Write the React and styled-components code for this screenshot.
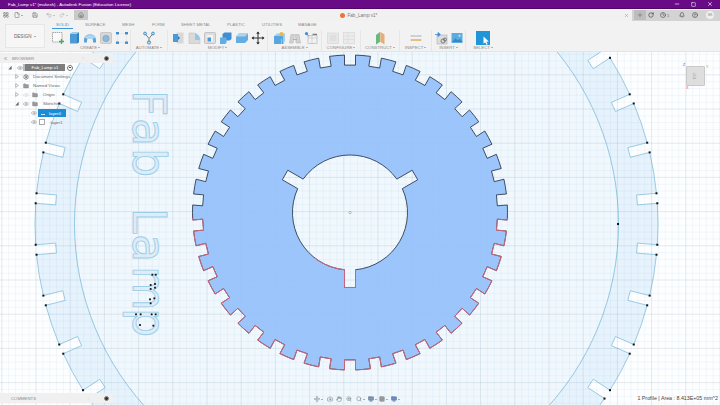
import React from 'react';
import styled, { createGlobalStyle } from 'styled-components';
import { LayoutGrid, File, Save, Undo2, Redo2, Home, Plus, RotateCw, Clock, Bell, CircleHelp, Minus, X, Settings, Eye, Folder, Hand, ZoomIn, Search, Monitor, Grid3x3, Camera, Move, Square, ChevronsLeft } from 'lucide-react';

const Global = createGlobalStyle`
  html, body { margin: 0; padding: 0; background: #fff; }
  body { font-family: "Liberation Sans", Arial, sans-serif; }
`;

const Root = styled.div`
  width: 720px; height: 405px; overflow: hidden;
  display: flex; flex-direction: column;
  font-family: "Liberation Sans", Arial, sans-serif;
`;

/* ---- title bar ---- */
const TitleBar = styled.div`
  height: 8px; flex: none; background: #690a86; border-bottom: 1px solid #4f0866;
  display: flex; align-items: center; padding: 0 7px 0 8px; color: #fff;
`;
const TitleText = styled.span`
  font-size: 4.35px; font-weight: 400; flex: 1; white-space: nowrap;
`;
const WinButtons = styled.div`
  display: flex; gap: 11px; align-items: center;
`;

/* ---- quick access ---- */
const QuickBar = styled.div`
  height: 12px; flex: none; background: #f1f1f1; display: flex; align-items: center;
`;
const QuickIcon = styled.span`
  display: flex; align-items: center; justify-content: center; flex: none;
  width: ${p => p.$w || 12}px; height: 10px; margin-right: ${p => p.$mr || 0}px;
  color: ${p => p.$c || '#666'}; background: ${p => p.$bg || 'transparent'};
`;
const DocTab = styled.div`
  position: absolute; left: 340px; top: 9px; height: 12px;
  display: flex; align-items: center; gap: 2.5px;
  font-size: 4.6px; color: #777;
`;
const OrangeDot = styled.span`
  width: 5px; height: 5px; border-radius: 50%; background: #e9743a; display: block;
`;
const Spacer = styled.div` flex: 1; `;
const CloseGlyph = styled.span`
  color: #888; display: flex; margin-right: 3px;
`;
const RightCluster = styled.div`
  width: 88px; height: 11px; background: #d3d3d3; display: flex; align-items: center; padding-left: 2px; box-sizing: border-box;
`;
const Avatar = styled.span`
  width: 8px; height: 8px; border-radius: 50%; background: #efefef; color: #888; font-size: 3px;
  display: flex; align-items: center; justify-content: center; margin-left: 8px;
`;
const Count = styled.span` font-size: 4px; color: #666; margin-right: 10px; `;

/* ---- ribbon ---- */
const Ribbon = styled.div`
  height: 31px; flex: none; background: #f2f2f2; display: flex; align-items: flex-start;
  padding-left: 5px; box-sizing: border-box; border-bottom: 1px solid #e4e4e4;
`;
const DesignButton = styled.div`
  width: 40px; height: 24px; margin-top: 3px; margin-right: 5px; flex: none; box-sizing: border-box;
  background: #f6f6f6; border: 1px solid #e6e6e6;
  display: flex; align-items: center; justify-content: center; gap: 1.5px;
  font-size: 4.6px; color: #666;
`;
const Caret = styled.span`
  display: inline-block; margin-left: 1px; vertical-align: middle;
  border-left: 1.2px solid transparent; border-right: 1.2px solid transparent; border-top: 1.6px solid ${p => p.$c || '#666'};
`;
const RibbonBody = styled.div` display: flex; flex-direction: column; `;
const Tabs = styled.div` display: flex; height: 8px; padding-left: 2px; `;
const Tab = styled.div`
  width: ${p => p.$w}px; margin-right: ${p => p.$mr || 0}px; height: 8px; box-sizing: border-box;
  font-size: 4.3px; line-height: 7px; white-space: nowrap;
  text-align: ${p => (p.$on ? 'center' : 'left')};
  color: ${p => (p.$on ? '#3b97d6' : '#8c8c8c')};
  border-bottom: ${p => (p.$on ? '1px solid #3b97d6' : 'none')};
`;
const Groups = styled.div` display: flex; height: 22px; `;
const Group = styled.div`
  width: ${p => p.$w}px; flex: none; box-sizing: border-box; display: flex; flex-direction: column; align-items: center;
  border-right: ${p => (p.$last ? 'none' : '1px solid #e6e6e6')};
  margin: 1px 0 0;
`;
const IconRow = styled.div`
  height: 15px; display: flex; align-items: center; gap: 2px;
`;
const GroupLabel = styled.div`
  font-size: 4.3px; line-height: 6px; color: #8a8a8a; white-space: nowrap;
`;
const Ico = styled.svg`
  width: 14px; height: 14px; display: block; flex: none; opacity: .92;
`;

/* ---- canvas ---- */
const Canvas = styled.div`
  flex: 1; position: relative; background: #fdfeff; overflow: hidden;
`;
const Drawing = styled.svg`
  display: block; width: 720px; height: 353px;
`;

/* ---- browser ---- */
const Browser = styled.div`
  position: absolute; left: 0; top: 1px; width: 113px;
`;
const PanelHead = styled.div`
  height: 10px; background: rgba(239,239,239,.96); display: flex; align-items: center; justify-content: space-between;
  padding: 0 3px 0 3px; font-size: 4.3px; color: #888;
`;
const PanelTitle = styled.span` flex: 1; margin-left: 4px; `;
const PinDot = styled.span`
  width: 3px; height: 3px; border-radius: 50%; background: #333; border: .5px solid #888; display: block; margin-right: 1px;
`;
const Row = styled.div`
  height: 9.1px; display: flex; align-items: center; padding-left: ${p => p.$indent}px;
  font-size: 4.4px; color: #666; white-space: nowrap;
`;
const Tri = styled.svg` width: 4px; height: 5px; display: block; flex: none; margin-right: ${p => p.$mr || 0}px; `;
const RowGlyph = styled.span`
  display: flex; flex: none; width: ${p => p.$w || 9}px; justify-content: center; color: ${p => p.$c || '#777'};
`;
const RootChip = styled.span`
  background: #7d7d7d; color: #fff; width: 42px; height: 7px; line-height: 7px; text-align: center; margin-right: 2px; font-size: 4.4px;
  border-left: 2px solid #bbb; box-sizing: border-box;
`;
const Pin = styled.span`
  width: 4px; height: 4px; border-radius: 50%; border: .5px solid #777; background: #fff; position: relative; display: block;
  &::after { content: ''; position: absolute; left: 1px; top: 1px; width: 1.5px; height: 1.5px; border-radius: 50%; background: #333; }
`;
const ActiveLayer = styled.span`
  width: 28px; height: 7.5px; background: #1b8dd6; color: #fff; display: flex; align-items: center; gap: 4px; padding-left: 3px; box-sizing: border-box; margin-left: 1px;
`;
const ActiveMark = styled.span` width: 4px; height: 1px; margin-top: 3px; background: #cfe8f8; display: block; `;
const Check = styled.span`
  width: 6px; height: 6px; background: #fff; border: .5px solid #aaa; box-sizing: border-box; display: block; margin: 0 6px 0 1.5px;
`;

const CommentsBar = styled.div`
  position: absolute; left: 0; bottom: 2px; width: 113px; height: 10px; background: rgba(239,239,239,.97);
  display: flex; align-items: center; justify-content: space-between; padding: 0 3px 0 11px; box-sizing: border-box;
  font-size: 4.3px; color: #888;
`;

const NavBar = styled.div`
  position: absolute; left: 314px; bottom: 3px; display: flex; align-items: center; color: #777;
`;
const NavItem = styled.span`
  display: flex; align-items: center; width: ${p => p.$w}px; color: ${p => p.$c || '#777'};
`;
const StatusText = styled.div`
  position: absolute; right: 2px; bottom: 4px; font-size: 5.3px; color: #444; white-space: nowrap;
`;

const Cube = styled.div`
  position: absolute; left: 686px; top: 14px; width: 19px; height: 20px; background: #dedede; border: 1px solid #c9c9c9; box-sizing: border-box;
  border-radius: 1px; display: flex; align-items: center; justify-content: center;
  font-size: 3.4px; color: #999; 
`;
const CubeLabel = styled.span` transform: rotate(-90deg); display: block; `;
const AxisMark = styled.span`
  position: absolute; font-size: 3.6px; color: ${p => p.$c}; left: ${p => p.$x}px; top: ${p => p.$y}px;
`;

/* ---- geometry ---- */
const rad = d => (d * Math.PI) / 180;
const f = n => n.toFixed(2);
const notchPts = (cx, cy, R, d, hw, n, k) => {
  const a = rad(-90 + (k * 360) / n);
  const h = Math.asin(hw / R);
  const u = [Math.cos(a), Math.sin(a)];
  const p1 = [cx + R * Math.cos(a - h), cy + R * Math.sin(a - h)];
  const p4 = [cx + R * Math.cos(a + h), cy + R * Math.sin(a + h)];
  return { p1, p2: [p1[0] - u[0] * d, p1[1] - u[1] * d], p3: [p4[0] - u[0] * d, p4[1] - u[1] * d], p4 };
};
const gearPath = (cx, cy, R, d, hw, n = 38) => {
  let s = '';
  let first;
  for (let k = 0; k < n; k++) {
    const { p1, p2, p3, p4 } = notchPts(cx, cy, R, d, hw, n, k);
    if (k === 0) { first = p1; s += `M${f(p1[0])} ${f(p1[1])}`; }
    else s += `A${R} ${R} 0 0 1 ${f(p1[0])} ${f(p1[1])}`;
    s += `L${f(p2[0])} ${f(p2[1])}L${f(p3[0])} ${f(p3[1])}L${f(p4[0])} ${f(p4[1])}`;
  }
  return s + `A${R} ${R} 0 0 1 ${f(first[0])} ${f(first[1])}Z`;
};
const holePath = (cx, cy, r, hw, len) => {
  const h = Math.asin(hw / r);
  let s = '';
  let first;
  [90, 210, 330].forEach((deg, i) => {
    const a = rad(deg);
    const u = [Math.cos(a), Math.sin(a)];
    const t = [-u[1], u[0]];
    const p1 = [cx + r * Math.cos(a - h), cy + r * Math.sin(a - h)];
    const p4 = [cx + r * Math.cos(a + h), cy + r * Math.sin(a + h)];
    const p2 = [cx + u[0] * len - t[0] * hw, cy + u[1] * len - t[1] * hw];
    const p3 = [cx + u[0] * len + t[0] * hw, cy + u[1] * len + t[1] * hw];
    if (i === 0) { first = p1; s += `M${f(p1[0])} ${f(p1[1])}`; }
    else s += `A${r} ${r} 0 0 1 ${f(p1[0])} ${f(p1[1])}`;
    s += `L${f(p2[0])} ${f(p2[1])}L${f(p3[0])} ${f(p3[1])}L${f(p4[0])} ${f(p4[1])}`;
  });
  return s + `A${r} ${r} 0 0 1 ${f(first[0])} ${f(first[1])}Z`;
};

const RC = [346.5, 224];
const GC = [350, 212.5];
const ringD = gearPath(RC[0], RC[1], 311.5, 20, 5);
const gearD = gearPath(GC[0], GC[1], 157.5, 10, 5.5);
const holeD = holePath(GC[0], GC[1], 57.5, 5.5, 75);

const ringDots = [];
for (let k = 0; k < 38; k++) {
  const { p1, p4 } = notchPts(RC[0], RC[1], 311.5, 20, 5, 38, k);
  [p1, p4].forEach(p => { if (p[1] > 52 && p[1] < 405) ringDots.push(p); });
}

const gridX = [];
const gridY = [];
for (let i = 0; i < 110; i++) gridX.push({ v: 1.8 + i * 6.84, major: (i - 5) % 5 === 0 });
for (let i = 0; i < 56; i++) gridY.push({ v: 40.6 + i * 6.84, major: i % 5 === 0 });

const letters = [
  ['F', 90], ['a', 118], ['b', 148], ['L', 208], ['a', 234], ['m', 266], ['p', 308],
];
const textDots = [[97,569],[107,569],[92,600],[105,597],[92,612],[105,608],[103,640],[90,643],[92,655],[48,688],[62,688],[95,688],[107,688],[60,720],[100,722]]
  .map(([x, y]) => [120 + x / 3, 85 + y / 3]);

/* ---- ribbon icons (drawings) ---- */
const I = ({ children }) => <Ico viewBox="0 0 14 14">{children}</Ico>;
const icons = {
  sketch: <I><rect x="1.5" y="1.5" width="9.5" height="9.5" fill="#fbfbfb" stroke="#777" strokeWidth=".7" strokeDasharray="1.4 .7"/><path d="M10.5 8v5M8 10.5h5" stroke="#3fa548" strokeWidth="1.4"/></I>,
  extrude: <I><path d="M3 3l2-1.5h7V11l-2 1.5H3z" fill="#3d93d6"/><path d="M5 1.5h7L10 3H3z" fill="#9ccdee"/><path d="M10 3l2-1.5V11l-2 1.5z" fill="#2477b8"/></I>,
  tube: <I><path d="M1 9.5C1 5 4 3.5 7 3.5s6 1.5 6 6v2H10V9.5c0-1.5-1.3-2.5-3-2.5S4 8 4 9.5v2H1z" fill="#4a9bdb"/><ellipse cx="7" cy="6" rx="5" ry="2" fill="#aad3ef"/></I>,
  hollow: <I><rect x="1.5" y="1.5" width="11" height="11" rx="1" fill="#d5d5d5" stroke="#a8a8a8" strokeWidth=".5"/><circle cx="7" cy="7.5" r="3.2" fill="#7db6df" stroke="#8a8a8a" strokeWidth=".5"/></I>,
  dots: <I><rect x="2.5" y="2.5" width="9" height="9" fill="none" stroke="#bfbfbf" strokeWidth=".4" strokeDasharray="1 1"/><g fill="#2f86c8"><rect x="1" y="1" width="3" height="2.4"/><rect x="10" y="1" width="3" height="2.4"/><rect x="1" y="10.5" width="3" height="2.4"/><rect x="10" y="10.5" width="3" height="2.4"/></g></I>,
  automate: <I><path d="M3 2.5L7 7.5 11 2.5M7 7.5v4" stroke="#777" strokeWidth="1" fill="none"/><g fill="none" stroke="#2f86c8" strokeWidth="1"><circle cx="3" cy="2.5" r="1.4"/><circle cx="11" cy="2.5" r="1.4"/><circle cx="7" cy="11.5" r="1.6"/></g></I>,
  press: <I><rect x="5.5" y="1.5" width="7" height="11" fill="#d5d5d5"/><rect x="2" y="3" width="5" height="8" fill="#3d93d6"/><path d="M7 5v4l2-2z" fill="#1d6fae"/></I>,
  fillet: <I><path d="M2 2h4c4 0 7 3 7 7v3.5H2z" fill="#d8d8d8" stroke="#b5b5b5" strokeWidth=".5"/><path d="M8 2.6c3 .8 5 3.5 5 6.4H8z" fill="#8fc3e8"/></I>,
  shell: <I><rect x="1.5" y="1.5" width="11" height="11" rx="1" fill="#dcdcdc" stroke="#a8a8a8" strokeWidth=".6"/><rect x="3.5" y="4" width="6.5" height="6.5" fill="#f4f4f4"/><rect x="4.5" y="6.5" width="3.5" height="4" fill="#3d93d6"/></I>,
  stack: <I><path d="M5.5 1.5h7v6.5l-2 1.5h-7V3z" fill="#2f86cf"/><path d="M1 6.5h6.5V12L6 13H1z" fill="#58a8e2"/></I>,
  slab: <I><path d="M1 5.5L4 2.5H13V9L10 12H1z" fill="#5aa8e0"/><path d="M1 5.5L4 2.5H13L10 5.5z" fill="#a8d2ef"/></I>,
  move: <I><path d="M7 1v12M1 7h12" stroke="#222" strokeWidth="1"/><path d="M7 .5L5.2 2.8h3.6zM7 13.5l-1.8-2.3h3.6zM.5 7l2.3-1.8v3.6zM13.5 7l-2.3-1.8v3.6z" fill="#222"/></I>,
  asm1: <I><rect x="2" y="5" width="9.5" height="8" fill="#4d9fdc"/><path d="M2 5l3-2.5h8V10l-1.5 3V5z" fill="#9ccbec"/><circle cx="9.5" cy="3" r="2" fill="#e8b23a"/><path d="M9.5 8v5" stroke="#e8b23a" strokeWidth="1"/></I>,
  asm2: <I><path d="M1.5 12L3 3.5h3.5L5 12zM8 12L7.5 3.5H11l1.5 8.5z" fill="#cfcfcf" stroke="#aaa" strokeWidth=".5"/><path d="M5 8.5h4" stroke="#999" strokeWidth=".7"/></I>,
  asm3: <I><rect x="4" y="4.5" width="9" height="8" fill="#f2f2f2" stroke="#9a9a9a" strokeWidth=".5"/><path d="M4 7h9M8 4.5v8" stroke="#aaa" strokeWidth=".4"/><rect x="8.5" y="2.8" width="4.5" height="1" fill="#555"/><circle cx="2.5" cy="2.6" r="1.6" fill="#2f86cf"/><path d="M3 3.6l2.2 1.8" stroke="#2f86cf" strokeWidth=".7"/></I>,
  cfg1: <I><rect x="1.5" y="2" width="11" height="10.5" fill="#e8e8e8" stroke="#d0d0d0" strokeWidth=".6"/><rect x="3.5" y="4" width="7" height="6" fill="#dedede"/></I>,
  cfg2: <I><rect x="1.5" y="1.5" width="11" height="11" fill="#ebebeb" stroke="#d3d3d3" strokeWidth=".6"/><path d="M1.5 5h11M1.5 8.5h11M6 1.5v11" stroke="#d3d3d3" strokeWidth=".5"/></I>,
  construct: <I><path d="M3 4l4-3v10l-4 2.5z" fill="#5fb573"/><path d="M7.5 1l4 2.5v10L7.5 11z" fill="#e3a96b"/><path d="M7 1v10" stroke="#c97" strokeWidth=".5"/></I>,
  inspect: <I><path d="M2 5h10" stroke="#9aa3ad" strokeWidth=".9"/><path d="M2 9h10" stroke="#e39a2e" strokeWidth="1.3"/><path d="M2 4v2M12 4v2M2 8v2M12 8v2" stroke="#aaa" strokeWidth=".4"/></I>,
  insert: <I><rect x="3" y="4" width="10" height="9" fill="#dcdcdc" stroke="#a0a0a0" strokeWidth=".5"/><path d="M1 3.5h5M4 1.5l2.4 2-2.4 2z" fill="#2f86cf" stroke="#2f86cf" strokeWidth=".8"/><circle cx="9" cy="10" r="2" fill="none" stroke="#555" strokeWidth=".8"/><circle cx="11" cy="8.5" r="1.5" fill="none" stroke="#555" strokeWidth=".8"/></I>,
  canvas: <I><rect x="1.5" y="2" width="11" height="10" fill="#4fa8e0"/><path d="M2 11l3.5-4 2.5 2.5 2-2 2.5 3.5z" fill="#2c7fbd"/><circle cx="9.5" cy="4.8" r="1" fill="#cfe8f8"/></I>,
  select: <I><rect x="0" y="0" width="14" height="14" fill="#0f8fd6"/><path d="M7.5 5.5l0 7.2 1.7-1.5 1.2 2.6 1.3-.6-1.2-2.5 2.3-.2z" fill="#fff"/></I>,
};

const groups = [
  ['CREATE', 81, ['sketch', 'extrude', 'tube', 'hollow', 'dots']],
  ['AUTOMATE', 37, ['automate']],
  ['MODIFY', 100, ['press', 'fillet', 'shell', 'stack', 'slab', 'move']],
  ['ASSEMBLE', 54, ['asm1', 'asm2', 'asm3']],
  ['CONFIGURE', 39, ['cfg1', 'cfg2']],
  ['CONSTRUCT', 39, ['construct']],
  ['INSPECT', 32, ['inspect']],
  ['INSERT', 34, ['insert', 'canvas']],
  ['SELECT', 34, ['select']],
];
const tabs = [
  ['SOLID', 21, 12, true], ['SURFACE', 37], ['MESH', 30], ['FORM', 29], ['SHEET METAL', 46], ['PLASTIC', 35], ['UTILITIES', 36], ['MANAGE', 30],
];

const TriIcon = ({ open, mr }) => (
  <Tri viewBox="0 0 4 5" $mr={mr}>
    {open ? <path d="M3.6 .8V4.4H.4z" fill="#666"/> : <path d="M.7 .6L3.4 2.5.7 4.4z" fill="#fff" stroke="#777" strokeWidth=".5"/>}
  </Tri>
);

export default function App() {
  return (
    <Root>
      <Global />
      <TitleBar>
        <TitleText>Fab_Lamp v1* (mukesh) - Autodesk Fusion (Education License)</TitleText>
        <WinButtons>
          <Minus size={6} strokeWidth={2.5} />
          <Square size={5} strokeWidth={2.5} />
          <X size={6} strokeWidth={2.5} />
        </WinButtons>
      </TitleBar>
      <QuickBar>
        <QuickIcon><LayoutGrid size={6} strokeWidth={2} /></QuickIcon>
        <QuickIcon $mr={5}><File size={6} strokeWidth={2} /><Caret /></QuickIcon>
        <QuickIcon $mr={3}><Save size={6} strokeWidth={2} /></QuickIcon>
        <QuickIcon $mr={1}><Undo2 size={6} strokeWidth={2} color="#999" /><Caret $c="#999" /></QuickIcon>
        <QuickIcon $mr={5}><Redo2 size={6} strokeWidth={2} color="#aaa" /><Caret $c="#aaa" /></QuickIcon>
        <QuickIcon $w={14} $bg="#c9c9c9" $c="#666"><Home size={6} strokeWidth={2.4} /></QuickIcon>
        <DocTab><OrangeDot />Fab_Lamp v1*</DocTab>
        <Spacer />
        <CloseGlyph><X size={5} strokeWidth={2} /></CloseGlyph>
        <RightCluster>
          <QuickIcon $bg="#bdbdbd" $mr={2}><Plus size={6} strokeWidth={2} /></QuickIcon>
          <QuickIcon $w={6} $mr={6} $c="#444"><RotateCw size={6} strokeWidth={2.6} /></QuickIcon>
          <QuickIcon $w={6} $mr={1} $c="#555"><Clock size={6} strokeWidth={2.6} /></QuickIcon>
          <Count>1</Count>
          <QuickIcon $w={6} $mr={7} $c="#555"><Bell size={6} strokeWidth={2.6} /></QuickIcon>
          <QuickIcon $w={6} $c="#555"><CircleHelp size={6} strokeWidth={2.6} /></QuickIcon>
          <Avatar>MK</Avatar>
        </RightCluster>
      </QuickBar>
      <Ribbon>
        <DesignButton>DESIGN<Caret /></DesignButton>
        <RibbonBody>
          <Tabs>
            {tabs.map(([t, w, mr, on]) => <Tab key={t} $w={w} $mr={mr} $on={on}>{t}</Tab>)}
          </Tabs>
          <Groups>
            {groups.map(([label, w, list], i) => (
              <Group key={label} $w={w} $last={i === groups.length - 1}>
                <IconRow>{list.map(k => <React.Fragment key={k}>{icons[k]}</React.Fragment>)}</IconRow>
                <GroupLabel>{label}<Caret $c="#777" /></GroupLabel>
              </Group>
            ))}
          </Groups>
        </RibbonBody>
      </Ribbon>
      <Canvas>
        <Drawing viewBox="0 52 720 353">
          <defs>
            <clipPath id="lower"><rect x="0" y="218" width="720" height="190" /></clipPath>
            <clipPath id="holeRed"><rect x="300" y="258" width="56" height="40" /></clipPath>
          </defs>
          <path d={ringD} fill="#e6f3fd" stroke="#85bfdc" strokeWidth=".8" />
          <circle cx={RC[0]} cy={RC[1]} r="272" fill="#f0f8fe" stroke="#7fbbdb" strokeWidth=".8" />
          <g>
            {gridX.map(l => <line key={l.v} x1={l.v} x2={l.v} y1="52" y2="405" stroke={l.major ? 'rgba(100,130,155,.27)' : 'rgba(120,160,190,.13)'} strokeWidth=".6" />)}
            {gridY.map(l => <line key={l.v} y1={l.v} y2={l.v} x1="0" x2="720" stroke={l.major ? 'rgba(100,130,155,.27)' : 'rgba(120,160,190,.13)'} strokeWidth=".6" />)}
          </g>
          <path d={gearD + holeD} fillRule="evenodd" fill="#95c1fb" fillOpacity=".93" />
          <path d={gearD} fill="none" stroke="#1d2a3c" strokeWidth=".8" />
          <path d={holeD} fill="none" stroke="#1d2a3c" strokeWidth=".8" />
          <path d={gearD} fill="none" stroke="#d9667a" strokeWidth=".9" clipPath="url(#lower)" />
          <path d={holeD} fill="none" stroke="#d9667a" strokeWidth=".9" clipPath="url(#holeRed)" />
          <circle cx="350" cy="212.5" r="1.2" fill="#fff" stroke="#777" strokeWidth=".5" />
          {letters.map(([c, y], i) => (
            <text key={i} transform={`translate(133 ${y}) rotate(90)`} fontFamily="'DejaVu Sans', sans-serif" fontSize="46" fill="#dcecf8" stroke="#9bcde6" strokeWidth=".9">{c}</text>
          ))}
          {textDots.map(([x, y], i) => <rect key={i} x={x - .9} y={y - .9} width="1.8" height="1.8" fill="#111" />)}
          {ringDots.map(([x, y], i) => <rect key={i} x={x - 1} y={y - 1} width="2" height="2" fill="#111" />)}
          <rect x="617" y="223" width="2" height="2" fill="#111" />
        </Drawing>

        <Browser>
          <PanelHead>
            <ChevronsLeft size={5} strokeWidth={2} color="#666" />
            <PanelTitle>BROWSER</PanelTitle>
            <PinDot />
          </PanelHead>
          <Row $indent={8}>
            <TriIcon open mr={5} />
            <RowGlyph $w={6}><Eye size={6} strokeWidth={1.6} /></RowGlyph>
            <RootChip>Fab_Lamp v1</RootChip>
            <Pin />
          </Row>
          <Row $indent={15}>
            <TriIcon mr={4} />
            <RowGlyph $w={6} $c="#555"><Settings size={6} strokeWidth={2.4} /></RowGlyph>
            <RowGlyph $w={4} />Document Settings
          </Row>
          <Row $indent={15}>
            <TriIcon mr={4} />
            <RowGlyph $w={6} $c="#888"><Folder size={6} fill="#999" strokeWidth={1.5} /></RowGlyph>
            <RowGlyph $w={4} />Named Views
          </Row>
          <Row $indent={15}>
            <TriIcon mr={3} />
            <RowGlyph $w={8} $c="#ccc"><Eye size={6} strokeWidth={1.6} /></RowGlyph>
            <RowGlyph $w={9} $c="#888"><Folder size={6} fill="#999" strokeWidth={1.5} /></RowGlyph>
            <RowGlyph $w={4} />Origin
          </Row>
          <Row $indent={15}>
            <TriIcon open mr={3} />
            <RowGlyph $w={8}><Eye size={6} strokeWidth={1.6} /></RowGlyph>
            <RowGlyph $w={9} $c="#888"><Folder size={6} fill="#999" strokeWidth={1.5} /></RowGlyph>
            <RowGlyph $w={4} />Sketches
          </Row>
          <Row $indent={30}>
            <RowGlyph $w={7}><Eye size={6} strokeWidth={1.6} /></RowGlyph>
            <ActiveLayer><ActiveMark />layer0</ActiveLayer>
          </Row>
          <Row $indent={30}>
            <RowGlyph $w={7}><Eye size={6} strokeWidth={1.6} /></RowGlyph>
            <Check />layer1
          </Row>
        </Browser>

        <CommentsBar>COMMENTS<PinDot /></CommentsBar>

        <NavBar>
          <NavItem $w={13}><Move size={6} strokeWidth={2} /><Caret /></NavItem>
          <NavItem $w={9}><Camera size={6} strokeWidth={2} /></NavItem>
          <NavItem $w={10}><Hand size={6} strokeWidth={2} /></NavItem>
          <NavItem $w={10}><ZoomIn size={6} strokeWidth={2} /></NavItem>
          <NavItem $w={12}><Search size={6} strokeWidth={2} /><Caret /></NavItem>
          <NavItem $w={11} $c="#5b6f8c"><Monitor size={6} fill="#8496b0" strokeWidth={2} /><Caret /></NavItem>
          <NavItem $w={12} $c="#8a8a8a"><Grid3x3 size={6} fill="#aaa" strokeWidth={2} /><Caret /></NavItem>
          <NavItem $w={10} $c="#4f6fa8"><Monitor size={6} fill="#6c8cc6" strokeWidth={2} /><Caret /></NavItem>
        </NavBar>

        <StatusText>1 Profile | Area : 8.413E+05 mm^2</StatusText>

        <Cube><CubeLabel>TOP</CubeLabel></Cube>
        <AxisMark $c="#4a4ac8" $x={683} $y={11}>Z</AxisMark>
        <AxisMark $c="#58b558" $x={706} $y={13}>Y</AxisMark>
        <AxisMark $c="#d8505a" $x={686} $y={34}>X</AxisMark>
      </Canvas>
    </Root>
  );
}
